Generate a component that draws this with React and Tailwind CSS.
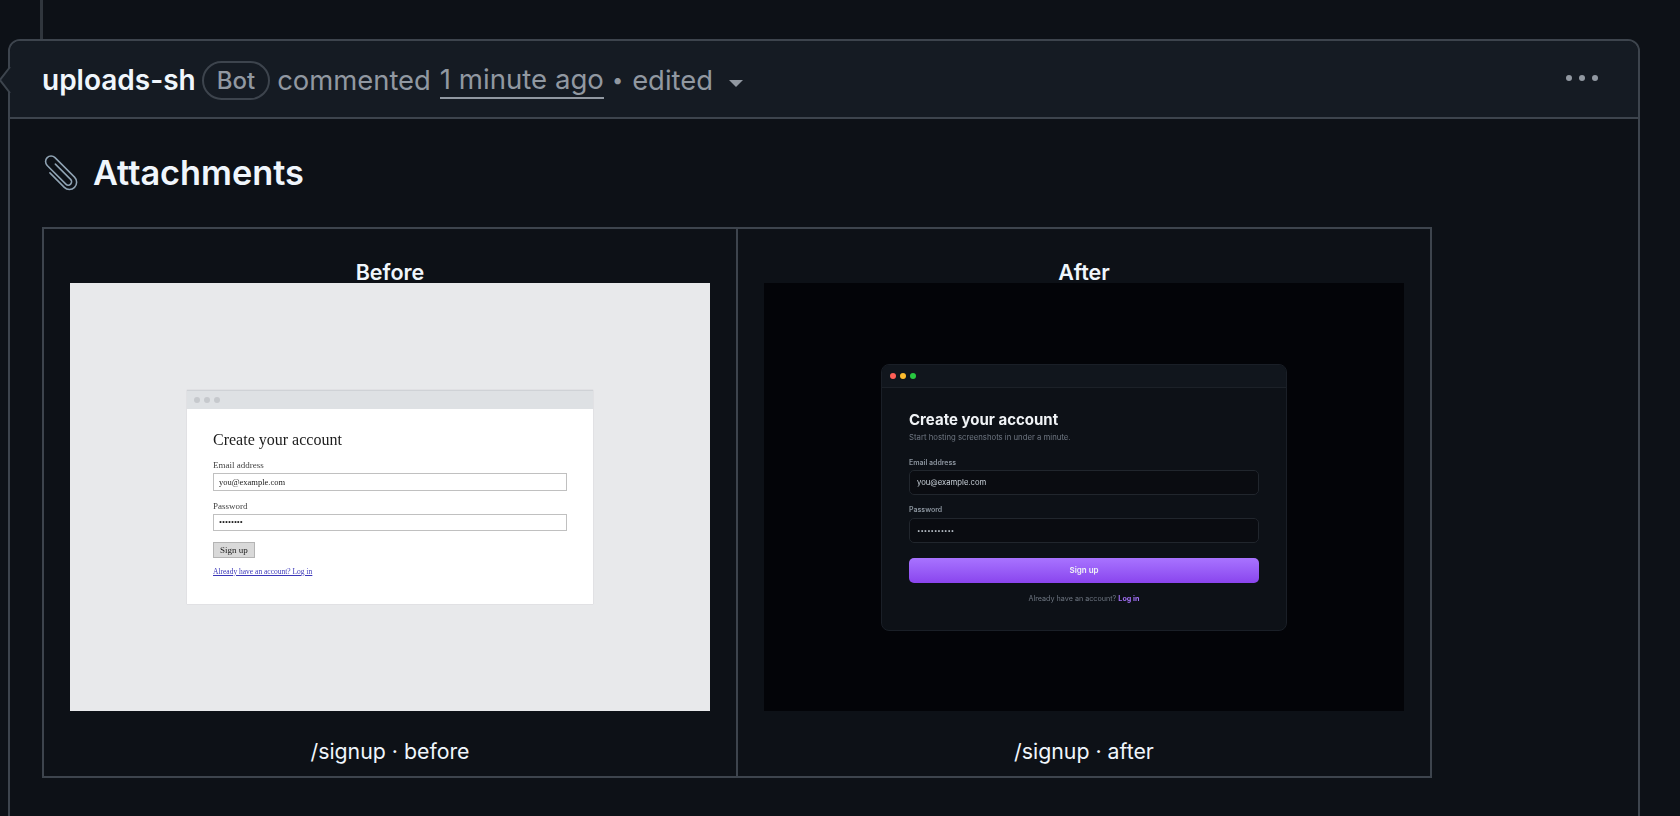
import React from "react";

function Paperclip() {
  return (
    <svg width="36" height="36" viewBox="3 3 30 30" fill="none" className="shrink-0">
      <g transform="rotate(-45 18 18)">
        <path
          d="M20.5 10 V28 a2.8 2.8 0 0 1 -5.6 0 V6 a4.6 4.6 0 0 1 9.2 0 V29 a6 6 0 0 1 -12 0 V12"
          stroke="#8fa3b3"
          strokeWidth="1.3"
          strokeLinecap="round"
        />
      </g>
    </svg>
  );
}

function BeforeShot() {
  return (
    <div className="w-[640px] h-[428px] bg-[#e8e9eb] flex items-center justify-center font-['Liberation_Serif',serif]">
      <div className="w-[406px] h-[214px] bg-white shadow-[0_0_1px_#bdbfc3] flex flex-col blur-[0.3px]">
        <div className="h-[19px] bg-[#dee1e4] border-t border-[#cfd2d6] flex items-center gap-[4px] pl-[7px]">
          <span className="w-[6px] h-[6px] rounded-full bg-[#c6c9cd]"></span>
          <span className="w-[6px] h-[6px] rounded-full bg-[#c6c9cd]"></span>
          <span className="w-[6px] h-[6px] rounded-full bg-[#c6c9cd]"></span>
        </div>
        <div className="flex flex-col pl-[26px] pr-[26px] pt-[21px]">
          <div className="text-[16px] leading-[20px] text-[#1c1c1c]">Create your account</div>
          <div className="text-[9px] leading-[11px] text-[#444] mt-[10px]">Email address</div>
          <div className="h-[18px] mt-[2px] border border-[#c0c0c0] pl-[5px] text-[8.5px] leading-[16px] text-[#222]">you@example.com</div>
          <div className="text-[9px] leading-[11px] text-[#444] mt-[10px]">Password</div>
          <div className="h-[17px] mt-[2px] border border-[#c0c0c0] pl-[5px] text-[8.5px] leading-[14px] text-[#222]">••••••••</div>
          <div className="w-[42px] h-[16px] mt-[11px] bg-[#d9d9d9] border border-[#b4b4b4] text-center text-[9px] leading-[14px] text-[#222]">Sign up</div>
          <div className="text-[7.5px] leading-[10px] text-[#3a36b8] underline mt-[9px]">Already have an account? Log in</div>
        </div>
      </div>
    </div>
  );
}

function AfterShot() {
  return (
    <div className="w-[640px] h-[428px] bg-[#030408] flex items-center justify-center font-['Inter',sans-serif]">
      <div className="w-[406px] h-[267px] bg-[#0d1117] border border-[#1a1f27] rounded-[8px] flex flex-col overflow-hidden blur-[0.3px]">
        <div className="h-[23px] bg-[#11161d] border-b border-[#1c2128] flex items-center gap-[4px] pl-[8px] shrink-0">
          <span className="w-[6px] h-[6px] rounded-full bg-[#ff5f57]"></span>
          <span className="w-[6px] h-[6px] rounded-full bg-[#febc2e]"></span>
          <span className="w-[6px] h-[6px] rounded-full bg-[#28c840]"></span>
        </div>
        <div className="flex flex-col px-[27px] pt-[22px]">
          <div className="text-[15px] leading-[20px] font-bold text-[#f0f3f6]">Create your account</div>
          <div className="text-[7.75px] leading-[12px] text-[#6e7681] mt-[1px]">Start hosting screenshots in under a minute.</div>
          <div className="text-[7px] leading-[10px] font-semibold text-[#8b949e] mt-[15px]">Email address</div>
          <div className="h-[25px] mt-[2px] bg-[#0a0c11] border border-[#21262d] rounded-[5px] pl-[7px] text-[7.7px] leading-[23px] text-[#c9d1d9]">you@example.com</div>
          <div className="text-[7px] leading-[10px] font-semibold text-[#8b949e] mt-[10px]">Password</div>
          <div className="h-[25px] mt-[3px] bg-[#0a0c11] border border-[#21262d] rounded-[5px] pl-[7px] text-[6px] leading-[23px] text-[#c9d1d9]">•••••••••••</div>
          <div className="h-[25px] mt-[15px] rounded-[5px] bg-gradient-to-b from-[#a873ff] to-[#8a44ee] text-center text-[8px] leading-[25px] font-semibold text-[#f0f3f6]">Sign up</div>
          <div className="text-center text-[7.2px] leading-[12px] text-[#6e7681] mt-[10px]">
            Already have an account? <span className="text-[#a371f7] font-bold">Log in</span>
          </div>
        </div>
      </div>
    </div>
  );
}

function ShotCell({ title, caption, children, className }) {
  return (
    <div className={`flex flex-col items-center ${className}`}>
      <div className="h-[54px] pt-[31px] text-[21.5px] leading-[24px] font-semibold text-[#f0f6fc]">{title}</div>
      {children}
      <div className="h-[65px] pt-[27px] text-[21.3px] leading-[26px] text-[#f0f6fc]">{caption}</div>
    </div>
  );
}

export default function App() {
  return (
    <div className="h-[816px] overflow-hidden bg-[#0d1117] font-['Inter',sans-serif]">
      <div className="ml-[40px] w-[3px] h-[39px] bg-[#30363d]"></div>
      <div className="relative ml-[8px] w-[1632px] h-[800px] border-2 border-[#3d444d] rounded-t-xl">
        <svg width="12" height="28" viewBox="0 0 12 28" className="absolute left-[-11px] top-[25px]">
          <path d="M11 1 L1 14 L11 27" fill="#151b23" stroke="#3d444d" strokeWidth="2" />
        </svg>
        <div className="h-[78px] pt-[2px] bg-[#151b23] border-b-2 border-[#3d444d] rounded-t-[10px] flex items-center pl-[32px] pr-[40px]">
          <span className="text-[28px] leading-[36px] font-semibold text-[#f0f6fc]">uploads-sh</span>
          <span className="ml-[6px] h-[39px] px-[13px] border-2 border-[#3d444d] rounded-full text-[24px] leading-[35px] font-medium text-[#9198a1]">Bot</span>
          <span className="ml-[7px] text-[27.4px] leading-[36px] text-[#9198a1]">commented</span>
          <span className="ml-[9px] text-[27.6px] leading-[36px] text-[#9198a1] border-b-2 border-[#9198a1]">1 minute ago</span>
          <span className="ml-[8px] text-[20px] leading-[36px] text-[#9198a1]">•</span>
          <span className="ml-[9px] text-[27.4px] leading-[36px] text-[#9198a1]">edited</span>
          <svg width="14" height="7" viewBox="0 0 14 7" className="ml-[16px] mt-[6px]">
            <path d="M0 0 H14 L7 7 Z" fill="#9198a1" />
          </svg>
          <div className="ml-auto flex items-center gap-[7px] mb-[4px]">
            <span className="w-[6px] h-[6px] rounded-full bg-[#9198a1]"></span>
            <span className="w-[6px] h-[6px] rounded-full bg-[#9198a1]"></span>
            <span className="w-[6px] h-[6px] rounded-full bg-[#9198a1]"></span>
          </div>
        </div>
        <div className="pl-[32px] pt-[32px]">
          <div className="flex items-center gap-[15px] h-[44px]">
            <Paperclip />
            <h3 className="text-[34.3px] leading-[44px] font-semibold text-[#f0f6fc]">Attachments</h3>
          </div>
          <div className="mt-[32px] w-[1390px] border-2 border-[#3d444d] grid grid-cols-[694px_692px]">
            <ShotCell title="Before" caption="/signup · before" className="border-r-2 border-[#3d444d]">
              <BeforeShot />
            </ShotCell>
            <ShotCell title="After" caption="/signup · after">
              <AfterShot />
            </ShotCell>
          </div>
        </div>
      </div>
    </div>
  );
}
